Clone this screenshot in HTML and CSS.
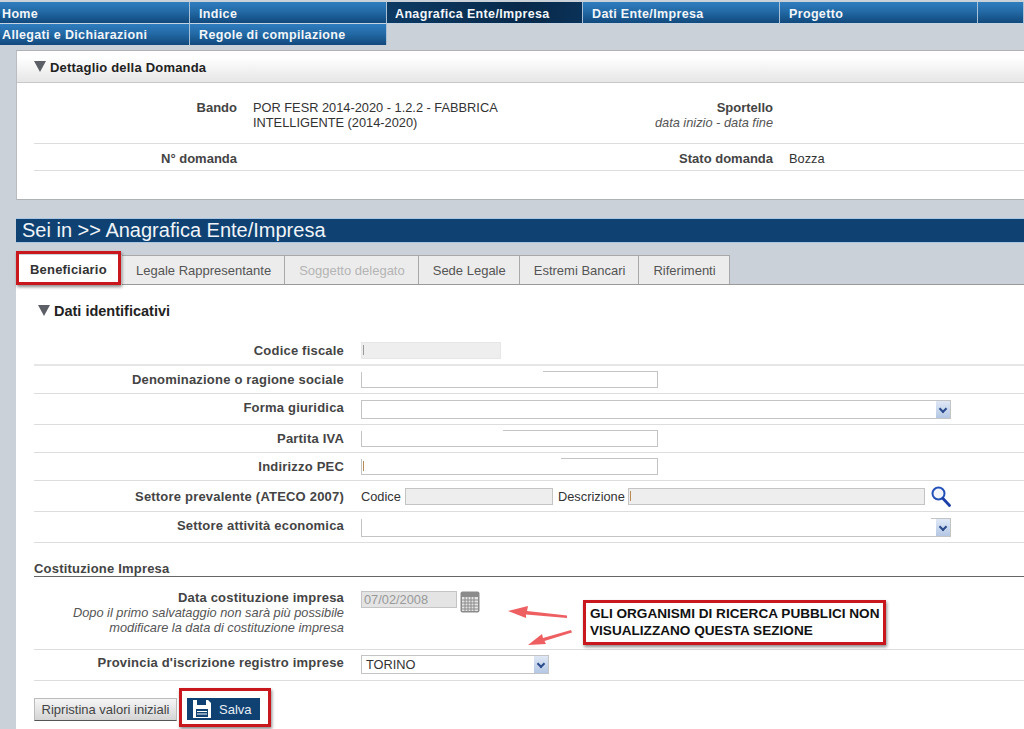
FILE: index.html
```html
<!DOCTYPE html>
<html lang="it">
<head>
    <meta charset="UTF-8">
    <title>Anagrafica Ente/Impresa</title>
    <link rel="stylesheet" href="styles.css">
</head>
<body>
    <nav class="menu">
        <a class="menu-item w190" href="#">Home</a>
        <a class="menu-item w197" href="#">Indice</a>
        <a class="menu-item w196 active" href="#">Anagrafica Ente/Impresa</a>
        <a class="menu-item w197" href="#">Dati Ente/Impresa</a>
        <a class="menu-item w198" href="#">Progetto</a>
        <a class="menu-item w46" href="#"></a>
        <a class="menu-item w190 low" href="#">Allegati e Dichiarazioni</a>
        <a class="menu-item w197 low" href="#">Regole di compilazione</a>
    </nav>

    <main class="page">
        <section class="detail">
            <h2 class="detail-head"><span class="tri"></span>Dettaglio della Domanda</h2>
            <div class="detail-row first">
                <div class="detail-label">Bando</div>
                <div class="detail-value wrap">POR FESR 2014-2020 - 1.2.2 - FABBRICA INTELLIGENTE (2014-2020)</div>
                <div class="detail-label right">Sportello<br><em>data inizio - data fine</em></div>
                <div class="detail-value"></div>
            </div>
            <div class="detail-row second">
                <div class="detail-label">N° domanda</div>
                <div class="detail-value wrap"></div>
                <div class="detail-label right">Stato domanda</div>
                <div class="detail-value">Bozza</div>
            </div>
        </section>

        <div class="crumb">Sei in &gt;&gt; Anagrafica Ente/Impresa</div>

        <div class="tabs">
            <a class="tab current" href="#">Beneficiario</a>
            <a class="tab" href="#">Legale Rappresentante</a>
            <a class="tab off" href="#">Soggetto delegato</a>
            <a class="tab" href="#">Sede Legale</a>
            <a class="tab" href="#">Estremi Bancari</a>
            <a class="tab" href="#">Riferimenti</a>
        </div>

        <section class="form">
            <h3 class="form-head"><span class="tri"></span>Dati identificativi</h3>

            <div class="row h-cf">
                <label>Codice fiscale</label>
                <div class="field ro faint w140"><span class="caret"></span></div>
            </div>
            <div class="row h28">
                <label>Denominazione o ragione sociale</label>
                <div class="field w297"><span class="rub r182"></span></div>
            </div>
            <div class="row h31">
                <label class="lift">Forma giuridica</label>
                <div class="field select w590"><span class="drop"></span></div>
            </div>
            <div class="row h28">
                <label>Partita IVA</label>
                <div class="field w297"><span class="rub r142"></span></div>
            </div>
            <div class="row h28">
                <label>Indirizzo PEC</label>
                <div class="field w297"><span class="rub r200"></span><span class="caret orange"></span></div>
            </div>
            <div class="row h31">
                <label>Settore prevalente (ATECO 2007)</label>
                <div class="inline">
                    <span class="txt-codice">Codice</span>
                    <div class="field ro w148"></div>
                    <span class="txt-descr">Descrizione</span>
                    <div class="field ro w297"><span class="caret orange"></span></div>
                    <svg class="lens" width="20" height="21" viewBox="0 0 20 21">
                        <circle cx="7.500" cy="7.500" r="6" fill="#f2f5fb" stroke="#2350b8" stroke-width="2"/>
                        <path d="M12 12.500l6.500 7" stroke="#1d3fa8" stroke-width="2.800" stroke-linecap="round"/>
                    </svg>
                </div>
            </div>
            <div class="row h31">
                <label class="lift">Settore attività economica</label>
                <div class="field select w590"><span class="rub r570"></span><span class="drop"></span></div>
            </div>

            <h4 class="sub-head">Costituzione Impresa</h4>

            <div class="row h73 top">
                <label>Data costituzione impresa
                    <em>Dopo il primo salvataggio non sarà più possibile modificare la data di costituzione impresa</em>
                </label>
                <div class="inline date-box">
                    <div class="field date">07/02/2008</div>
                    <svg class="cal" width="20" height="22" viewBox="0 0 20 22">
                        <rect x="0.500" y="0.500" width="19" height="21" rx="2" fill="#8b8b8b"/>
                        <rect x="2" y="6" width="16" height="14" fill="#e4e4e4"/>
                        <path d="M2 9h16M2 12h16M2 15h16M2 18h16M5 6v14M8 6v14M11 6v14M14 6v14" stroke="#8b8b8b" stroke-width="1"/>
                    </svg>
                </div>
            </div>
            <div class="row h31">
                <label class="lift up">Provincia d'iscrizione registro imprese</label>
                <div class="field select up">TORINO<span class="drop"></span></div>
            </div>

            <div class="actions">
                <button class="btn-reset" type="button">Ripristina valori iniziali</button>
                <button class="btn-save" type="button">
                    <svg width="18" height="18" viewBox="0 0 18 18">
                        <path d="M0 0h15l3 3v15H0z" fill="#fff"/>
                        <rect x="4" y="0" width="9" height="5" fill="#0f4273"/>
                        <rect x="3" y="9" width="12" height="8" fill="#0f4273"/>
                        <path d="M4 11.500h10M4 14h10" stroke="#fff" stroke-width="1"/>
                    </svg>
                    Salva
                </button>
            </div>
        </section>
    </main>

    <!-- annotazioni sopra lo screenshot -->
    <div class="mark mark-tab"></div>
    <div class="mark mark-save"></div>
    <div class="callout">GLI ORGANISMI DI RICERCA PUBBLICI NON VISUALIZZANO QUESTA SEZIONE</div>
    <svg class="arrows" width="70" height="45" viewBox="0 0 70 45">
        <path d="M0 7L20 2L19 7L59 11.500L59 14L18 10.500L18 14z" fill="#ee5f62"/>
        <path d="M20 41L34 30L35 34L63 26L64 28.500L36.500 37L38 40z" fill="#ee5f62"/>
    </svg>
</body>
</html>
```

FILE: styles.css
```css
* {
    box-sizing: border-box;
}
html, body {
    margin: 0;
    padding: 0;
}
body {
    position: relative;
    height: 729px;
    overflow: hidden;
    background: #cbd1d8;
    font-family: "Liberation Sans", Arial, sans-serif;
    font-size: 12.8px;
    color: #333;
}

/* menu */
.menu {
    display: flex;
    flex-wrap: wrap;
    padding-top: 2px;
}
.menu-item {
    display: block;
    height: 22px;
    line-height: 24px;
    padding-left: 2px;
    background: linear-gradient(#2f7dbf 0%, #236aa6 45%, #12497c 100%);
    border-right: 1px solid #a9c0d6;
    border-bottom: 1px solid #c5d4e2;
    color: #f2f6fa;
    font-weight: bold;
    font-size: 12.5px;
    letter-spacing: 0.35px;
    text-decoration: none;
}
.menu-item.low {
    height: 21px;
    line-height: 22px;
    border-bottom: 0;
}
.w190 { width: 190px; }
.w197 { width: 197px; padding-left: 9px; }
.w196 { width: 196px; padding-left: 8px; }
.w198 { width: 198px; padding-left: 9px; }
.w46 { width: 46px; }
.menu-item.active {
    background: linear-gradient(90deg, #0d3a63 0%, #08294a 70%, #0a3157 100%);
}

/* contenuto */
.page {
    margin-left: 16px;
    padding-top: 5px;
}
.tri {
    display: inline-block;
    width: 0;
    height: 0;
    margin-right: 4px;
    border-left: 6px solid transparent;
    border-right: 6px solid transparent;
    border-top: 11px solid #5c6066;
}

.detail {
    height: 150px;
    background: #fff;
    border-top: 1px solid #aeb2b6;
    border-left: 1px solid #b9bdc2;
    border-bottom: 1px solid #aeb2b6;
}
.detail-head {
    height: 32px;
    margin: 0;
    padding-left: 17px;
    line-height: 33px;
    font-size: 13px;
    color: #222;
    letter-spacing: 0.2px;
    background: linear-gradient(#fff 20%, #e6e6e6 100%);
    border-bottom: 1px solid #c8c8c8;
}
.detail-row {
    display: flex;
    margin-left: 17px;
    border-bottom: 1px solid #ddd;
}
.detail-row.first {
    height: 61px;
    padding-top: 17px;
}
.detail-row.second {
    height: 27px;
    padding-top: 7px;
}
.detail-label {
    flex: none;
    width: 203px;
    text-align: right;
    font-size: 13px;
    font-weight: bold;
    color: #444;
    line-height: 15px;
    letter-spacing: 0;
}
.detail-label.right {
    width: 271px;
}
.detail-label em {
    font-size: 12.8px;
    font-weight: normal;
    color: #555;
    letter-spacing: 0;
}
.detail-value {
    padding-left: 16px;
    line-height: 15px;
    color: #333;
}
.detail-value.wrap {
    flex: none;
    width: 265px;
}

.crumb {
    height: 23px;
    margin-top: 19px;
    padding-left: 6px;
    line-height: 22px;
    background: #0f4273;
    color: #f0f4f8;
    font-size: 20px;
    box-shadow: 0 -1px 0 #a9c6e4, 0 1px 0 #a9c6e4;
}

.tabs {
    display: flex;
    height: 30px;
    margin-top: 13px;
    border-bottom: 1px solid #9a9a9a;
}
.tab {
    height: 29px;
    padding: 0 13px 0 14px;
    line-height: 29px;
    background: #ececec;
    border: 1px solid #a8a8a8;
    border-bottom: 0;
    border-left: 0;
    color: #555;
    font-size: 13px;
    text-decoration: none;
}
.tab.current {
    width: 106px;
    height: 30px;
    padding: 0 0 0 14px;
    background: #fff;
    color: #333;
    font-weight: bold;
    letter-spacing: 0.2px;
    border: 0;
}
.tab.off {
    color: #b4b4b4;
}

.form {
    height: 444px;
    padding: 0 0 0 18px;
    background: #fff;
}
.form-head {
    height: 38px;
    margin: 0;
    padding: 17px 0 0 4px;
    font-size: 14.5px;
    line-height: 18px;
    color: #222;
}
.row {
    display: flex;
    align-items: center;
    border-bottom: 1px solid #ddd;
}
.row.top {
    align-items: flex-start;
    padding-top: 13px;
}
.h-cf { height: 43px; padding-top: 14px; border-bottom-width: 2px; border-bottom-color: #e6e6e6; }
.h28 { height: 28px; }
.h31 { height: 31px; }
.h73 { height: 73px; }
.row label {
    flex: none;
    width: 310px;
    margin-right: 17px;
    text-align: right;
    font-size: 13px;
    font-weight: bold;
    color: #444;
    letter-spacing: 0.2px;
    line-height: 15px;
}
.row label.lift {
    margin-bottom: 4px;
}
.row label.lift.up {
    margin-bottom: 6px;
}
.row label em {
    display: block;
    font-size: 12.8px;
    font-weight: normal;
    color: #555;
    letter-spacing: 0;
    padding-left: 20px;
}
.field {
    position: relative;
    height: 17px;
    line-height: 15px;
    padding-left: 4px;
    background: #fff;
    border: 1px solid #c4c4c4;
    color: #333;
}
.field.ro {
    background: #eee;
}
.field.faint {
    border-color: #e6e6e6;
}
.w140 { width: 140px; }
.w148 { width: 148px; }
.w297 { width: 297px; }
.w590 { width: 590px; }
.select {
    height: 19px;
    line-height: 18px;
}
.select.up {
    width: 188px;
    margin-bottom: 2px;
}
/* pezzi di bordo cancellati dall'oscuramento dei dati */
.rub {
    position: absolute;
    left: -1px;
    top: -1px;
    height: 1px;
    background: #fff;
}
.r142 { width: 142px; }
.r182 { width: 182px; }
.r200 { width: 200px; }
.r570 { width: 570px; }
.drop {
    position: absolute;
    top: 0;
    right: 0;
    width: 14px;
    height: 17px;
    background: linear-gradient(#dfe8f6, #b4c7e4);
}
.drop::after {
    content: "";
    position: absolute;
    left: 4px;
    top: 5px;
    width: 4px;
    height: 4px;
    border-right: 2px solid #2b4b8c;
    border-bottom: 2px solid #2b4b8c;
    transform: rotate(45deg);
}
.caret {
    display: block;
    width: 1px;
    height: 10px;
    margin-top: 2px;
    margin-left: -3px;
    background: #999;
}
.caret.orange {
    background: #b98b55;
}
.inline {
    display: flex;
    align-items: center;
    color: #333;
}
.date-box {
    align-items: flex-start;
    margin-top: 1px;
}
.txt-codice {
    width: 44px;
}
.txt-descr {
    width: 70px;
    margin-left: 5px;
}
.lens {
    margin-left: 6px;
}
.sub-head {
    height: 34px;
    margin: 0;
    padding-top: 18px;
    font-size: 13px;
    line-height: 15px;
    color: #444;
    letter-spacing: 0.2px;
    border-bottom: 1px solid #666;
}
.date {
    width: 96px;
    padding-left: 2px;
    background: #e4e4e4;
    color: #999;
}
.cal {
    margin-left: 3px;
}
.actions {
    display: flex;
    gap: 10px;
    padding-top: 17px;
}
.btn-reset {
    width: 143px;
    height: 23px;
    padding: 0;
    background: linear-gradient(#f6f6f6, #d4d4d4);
    border: 1px solid #bbb;
    border-bottom: 1px solid #555;
    color: #444;
    font: 13px "Liberation Sans", Arial, sans-serif;
}
.btn-save {
    display: flex;
    align-items: center;
    gap: 8px;
    width: 73px;
    height: 22px;
    padding: 0 0 0 6px;
    background: #0f4273;
    border: 0;
    color: #e8eef4;
    font: 13px "Liberation Sans", Arial, sans-serif;
}

/* annotazioni */
.mark {
    position: absolute;
    border: 3px solid #c8171d;
    box-shadow: 1px 2px 3px rgba(0, 0, 0, 0.45);
}
.mark-tab {
    left: 16px;
    top: 251px;
    width: 105px;
    height: 34px;
}
.mark-save {
    left: 179px;
    top: 688px;
    width: 92px;
    height: 39px;
}
.callout {
    position: absolute;
    left: 583px;
    top: 600px;
    width: 303px;
    height: 45px;
    padding: 2px 0 0 4px;
    background: #fff;
    border: 3px solid #c8171d;
    box-shadow: 1px 2px 3px rgba(0, 0, 0, 0.45);
    color: #111;
    font-size: 13.6px;
    font-weight: bold;
    line-height: 17px;
}
.arrows {
    position: absolute;
    left: 508px;
    top: 604px;
}
```
